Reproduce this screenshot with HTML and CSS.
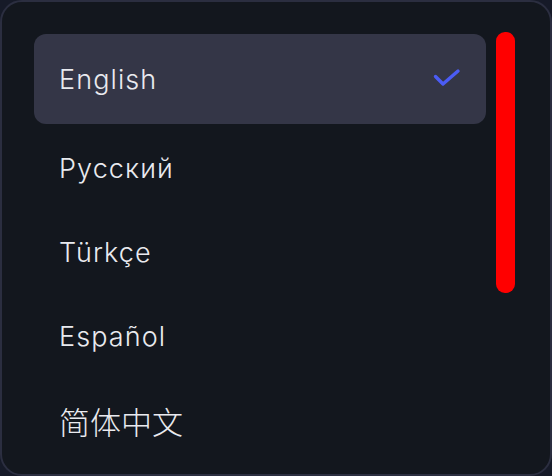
FILE: index.html
```html
<!DOCTYPE html>
<html>
<head>
<meta charset="utf-8">
<link rel="stylesheet" href="styles.css">
</head>
<body>
<div class="panel">
  <ul class="list">
    <li class="item selected">
      <span class="label">English</span>
      <svg class="check" width="30" height="22" viewBox="0 0 30 22"><path d="M2.5 8.5 L10 16 L25 3" fill="none" stroke="#4b5cf5" stroke-width="3.4" stroke-linecap="round" stroke-linejoin="round"/></svg>
    </li>
    <li class="item"><span class="label">Русский</span></li>
    <li class="item"><span class="label">Türkçe</span></li>
    <li class="item"><span class="label">Español</span></li>
    <li class="item"><span class="label cjk">简体中文</span></li>
  </ul>
  <div class="scrollbar"></div>
</div>
</body>
</html>
```
FILE: styles.css
```css
html, body {
  margin: 0;
  padding: 0;
  background: #161a28;
}
body {
  width: 552px;
  height: 476px;
  overflow: hidden;
}
.panel {
  position: relative;
  box-sizing: border-box;
  width: 552px;
  height: 476px;
  background: #13171e;
  border: 2px solid #2b2e40;
  border-radius: 22px;
  padding: 32px 64px 0 32px;
}
.list {
  list-style: none;
  margin: 0;
  padding: 0;
}
.item {
  display: flex;
  align-items: center;
  justify-content: space-between;
  height: 84px;
  padding: 0 23px 0 25px;
  border-radius: 12px;
  font-family: "Inter", "Noto Sans CJK SC", sans-serif;
  font-weight: 350;
  letter-spacing: 1.1px;
  font-size: 27px;
  color: #e9eaef;
}
.item.selected {
  height: 90px;
  margin-bottom: 2px;
  background: #343647;
}
.label {
  line-height: 1;
}
.cjk {
  font-family: "Noto Sans CJK SC", sans-serif;
  font-weight: 300;
  letter-spacing: 0;
  font-size: 31px;
}
.scrollbar {
  position: absolute;
  left: 494px;
  top: 30px;
  width: 19px;
  height: 261px;
  background: #ff0000;
  border-radius: 9px;
}
```
